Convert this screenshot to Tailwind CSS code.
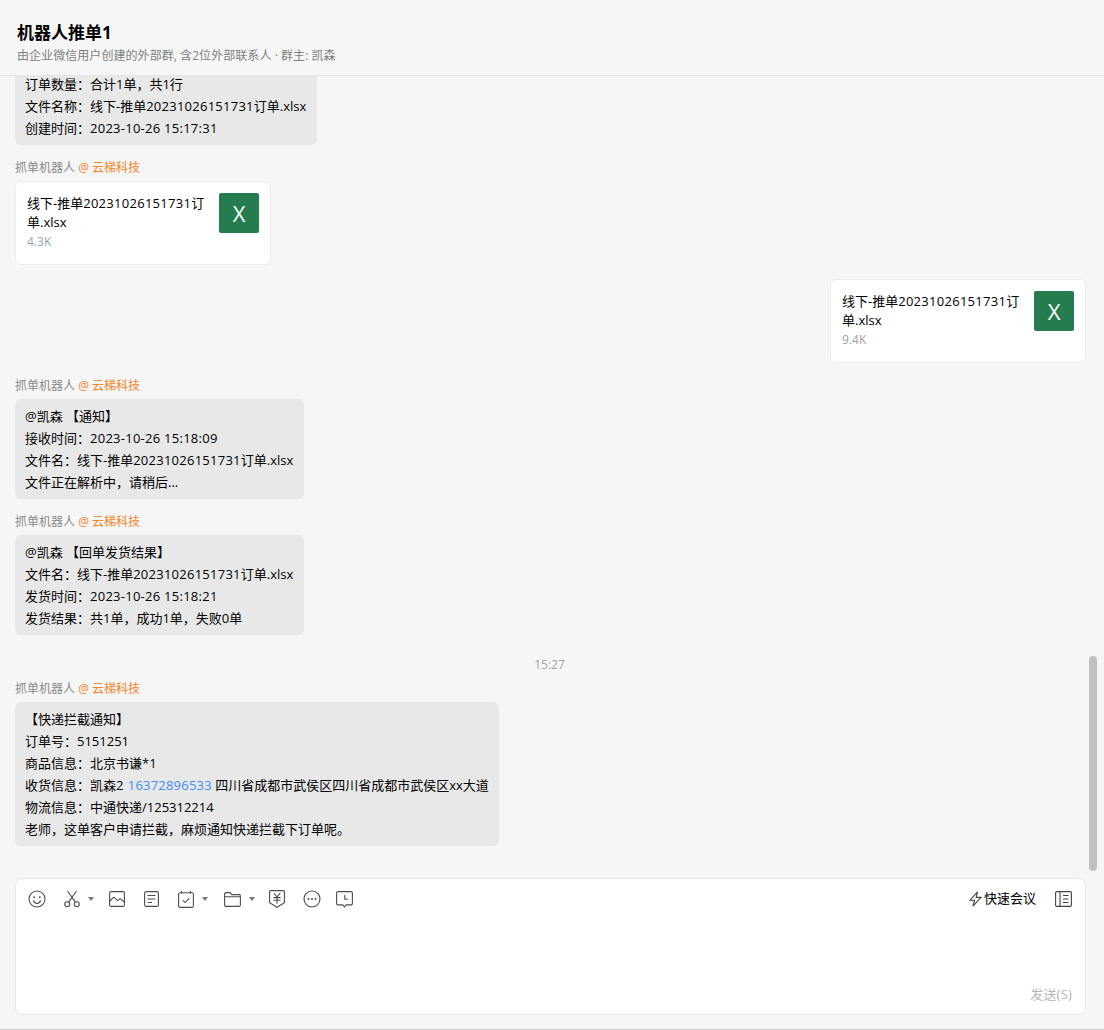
<!DOCTYPE html>
<html lang="zh">
<head>
<meta charset="utf-8">
<title>机器人推单1</title>
<script src="https://cdn.jsdelivr.net/npm/@tailwindcss/browser@4"></script>
</head>
<body class="bg-[#f6f6f6] font-['Open_Sans','Noto_Sans_CJK_SC',sans-serif] text-[13px] text-black">
<div class="relative flex flex-col h-[1030px] overflow-hidden border-b border-[#c9c9ce]">

    <!-- Header -->
    <header class="h-[76px] shrink-0 border-b border-[#e6e6e6] pl-[17px] pt-[20px]">
        <h1 class="text-[17px] leading-[26px] font-bold">机器人推单1</h1>
        <p class="text-[12px] leading-[18px] mt-[1px] tracking-[.06px] text-[#7f7f7f]">由企业微信用户创建的外部群, 含2位外部联系人 · 群主: 凯森</p>
    </header>

    <!-- Messages -->
    <main class="h-[795px] shrink-0 overflow-hidden flex flex-col justify-end px-[15px] pr-[18px]">
        <div class="w-fit shrink-0 bg-[#e8e8e8] rounded-md pl-2.5 pr-[11px] py-1.5 leading-[22px]">
            <p>订单数量：合计1单，共1行</p>
            <p>文件名称：线下-推单<span class="tracking-[.25px]">20231026151731</span>订单.xlsx</p>
            <p>创建时间：<span class="tracking-[.26px]">2023-10-26 15:17:31</span></p>
        </div>

        <p class="shrink-0 mt-[15px] mb-[5px] text-[12px] leading-[16px] text-[#8a8a8a]">抓单机器人 <span class="text-[#f5842c]">@ 云梯科技</span></p>
        <div class="shrink-0 flex justify-between w-[256px] h-[84px] bg-white border border-[#ececec] rounded-md px-[11px] pt-[11px]">
            <div class="w-[180px] leading-[19px] pt-[1px]">
                <p class="break-all">线下-推单<span class="tracking-[.28px]">20231026151731</span>订单.xlsx</p>
                <p class="text-[12px] text-[#8fa3b5] leading-[19px]">4.3K</p>
            </div>
            <div class="w-[40px] h-[40px] bg-[#257d4f] rounded-[2px] flex items-center justify-center text-white text-[22px]">X</div>
        </div>

        <div class="shrink-0 self-end flex justify-between w-[256px] h-[84px] mt-[14px] bg-white border border-[#ececec] rounded-md px-[11px] pt-[11px]">
            <div class="w-[180px] leading-[19px] pt-[1px]">
                <p class="break-all">线下-推单<span class="tracking-[.28px]">20231026151731</span>订单.xlsx</p>
                <p class="text-[12px] text-[#a0a0a0] leading-[19px]">9.4K</p>
            </div>
            <div class="w-[40px] h-[40px] bg-[#257d4f] rounded-[2px] flex items-center justify-center text-white text-[22px]">X</div>
        </div>

        <p class="shrink-0 mt-[15px] mb-[5px] text-[12px] leading-[16px] text-[#8a8a8a]">抓单机器人 <span class="text-[#f5842c]">@ 云梯科技</span></p>
        <div class="w-fit shrink-0 bg-[#e8e8e8] rounded-md pl-2.5 pr-[11px] py-1.5 leading-[22px]">
            <p>@凯森 【通知】</p>
            <p>接收时间：<span class="tracking-[.26px]">2023-10-26 15:18:09</span></p>
            <p>文件名：线下-推单<span class="tracking-[.25px]">20231026151731</span>订单.xlsx</p>
            <p>文件正在解析中，请稍后...</p>
        </div>

        <p class="shrink-0 mt-[15px] mb-[5px] text-[12px] leading-[16px] text-[#8a8a8a]">抓单机器人 <span class="text-[#f5842c]">@ 云梯科技</span></p>
        <div class="w-fit shrink-0 bg-[#e8e8e8] rounded-md pl-2.5 pr-[11px] py-1.5 leading-[22px]">
            <p>@凯森 【回单发货结果】</p>
            <p>文件名：线下-推单<span class="tracking-[.25px]">20231026151731</span>订单.xlsx</p>
            <p>发货时间：<span class="tracking-[.26px]">2023-10-26 15:18:21</span></p>
            <p>发货结果：共1单，成功1单，失败0单</p>
        </div>

        <p class="shrink-0 mt-[21px] pr-[2px] text-center text-[12px] leading-[18px] text-[#a3a3a3]">15:27</p>

        <p class="shrink-0 mt-[7px] mb-[5px] text-[12px] leading-[16px] text-[#8a8a8a]">抓单机器人 <span class="text-[#f5842c]">@ 云梯科技</span></p>
        <div class="w-fit shrink-0 bg-[#e8e8e8] rounded-md px-2.5 py-1.5 leading-[22px]">
            <p>【快递拦截通知】</p>
            <p>订单号：5151251</p>
            <p>商品信息：北京书谦*1</p>
            <p>收货信息：凯森2 <span class="ml-[1px] tracking-[.2px] text-[#3f8cf5]">16372896533</span> 四川省成都市武侯区四川省成都市武侯区xx大道</p>
            <p>物流信息：中通快递/125312214</p>
            <p>老师，这单客户申请拦截，麻烦通知快递拦截下订单呢。</p>
        </div>
        <div class="h-[25px] shrink-0"></div>
    </main>

    <!-- Scrollbar -->
    <div class="absolute left-[1089px] top-[656px] w-[8px] h-[215px] rounded-full bg-[#c0c0c0]"></div>

    <!-- Input box -->
    <section class="relative mx-[15px] mt-[7px] w-[1071px] h-[137px] bg-white border border-[#e6e6e6] rounded-[8px]">
        <div class="flex items-center h-[40px] pl-[12px] pr-[13px] text-[#4d4d4d]">
            <!-- smile -->
            <svg class="w-[18px] h-[18px]" viewBox="0 0 18 18" fill="none" stroke="currentColor" stroke-width="1.1"><circle cx="9" cy="9" r="8"/><circle cx="6.2" cy="7.2" r=".9" fill="currentColor" stroke="none"/><circle cx="11.8" cy="7.2" r=".9" fill="currentColor" stroke="none"/><path d="M5.2 10.6c1 2 2.4 3 3.8 3s2.800-1 3.800-3"/></svg>
            <!-- scissors -->
            <svg class="w-[16px] h-[18px] ml-[18px]" viewBox="0 0 16 18" fill="none" stroke="currentColor" stroke-width="1.1"><circle cx="3.200" cy="14.200" r="2.500"/><circle cx="12.800" cy="14.200" r="2.500"/><path d="M4.600 12.100 12.500 1M11.400 12.100 3.500 1"/></svg>
            <svg class="w-[6px] h-[4px] ml-[8px] text-[#777]" viewBox="0 0 6 4" fill="currentColor"><path d="M0 0h6L3 4z"/></svg>
            <!-- picture -->
            <svg class="w-[16px] h-[16px] ml-[15px]" viewBox="0 0 16 16" fill="none" stroke="currentColor" stroke-width="1.1"><rect x=".6" y=".6" width="14.800" height="14.800" rx="1.500"/><path d="M.8 10 4.800 6.200 8.600 9.600 11 7.600 15.200 10.800"/></svg>
            <!-- note -->
            <svg class="w-[15px] h-[16px] ml-[19px]" viewBox="0 0 15 16" fill="none" stroke="currentColor" stroke-width="1.1"><rect x=".6" y=".6" width="13.800" height="14.800" rx="1.500"/><path d="M3.500 4.500h8M3.500 8h8M3.500 11.500h4.500"/></svg>
            <!-- calendar check -->
            <svg class="w-[16px] h-[17px] ml-[19px]" viewBox="0 0 16 17" fill="none" stroke="currentColor" stroke-width="1.1"><rect x=".6" y="1.800" width="14.800" height="14.600" rx="1.500"/><path d="M3.500 0v2.500M12.500 0v2.500M4.800 9.400 7.200 11.600 11.200 7.400"/></svg>
            <svg class="w-[6px] h-[4px] ml-[8px] text-[#777]" viewBox="0 0 6 4" fill="currentColor"><path d="M0 0h6L3 4z"/></svg>
            <!-- folder -->
            <svg class="w-[17px] h-[15px] ml-[16px]" viewBox="0 0 17 15" fill="none" stroke="currentColor" stroke-width="1.1"><path d="M.6 4.800V2a1.400 1.400 0 0 1 1.400-1.400h4l1.800 2h7.200A1.400 1.400 0 0 1 16.400 4v9a1.400 1.400 0 0 1-1.400 1.400H2A1.400 1.400 0 0 1 .6 13zh15.800"/></svg>
            <svg class="w-[6px] h-[4px] ml-[8px] text-[#777]" viewBox="0 0 6 4" fill="currentColor"><path d="M0 0h6L3 4z"/></svg>
            <!-- red packet -->
            <svg class="w-[16px] h-[18px] ml-[14px]" viewBox="0 0 16 18" fill="none" stroke="currentColor" stroke-width="1.1"><path d="M.6 1.600A1 1 0 0 1 1.600.6h12.800a1 1 0 0 1 1 1v11.200L8 17.300.6 12.800z"/><path d="M4.800 3.200 8 7l3.200-3.800M4.500 7.600h7M4.500 10.300h7M8 7v6.500"/></svg>
            <!-- more -->
            <svg class="w-[18px] h-[18px] ml-[18px]" viewBox="0 0 18 18" fill="none" stroke="currentColor" stroke-width="1.1"><circle cx="9" cy="9" r="8"/><circle cx="5.500" cy="9" r="1" fill="currentColor" stroke="none"/><circle cx="9" cy="9" r="1" fill="currentColor" stroke="none"/><circle cx="12.500" cy="9" r="1" fill="currentColor" stroke="none"/></svg>
            <!-- clock message -->
            <svg class="w-[17px] h-[17px] ml-[15px]" viewBox="0 0 17 17" fill="none" stroke="currentColor" stroke-width="1.1"><path d="M2 .6h13A1.400 1.400 0 0 1 16.400 2v10.500a1.400 1.400 0 0 1-1.400 1.400h-4.800L8.500 16l-1.700-2.100H2a1.400 1.400 0 0 1-1.400-1.400V2A1.400 1.400 0 0 1 2 .6z"/><path d="M8.800 4v4.200h3"/></svg>

            <div class="ml-auto flex items-center text-black">
                <svg class="w-[13px] h-[16px] text-[#444]" viewBox="0 0 13 16" fill="none" stroke="currentColor" stroke-width="1.1"><path d="M8.500.8 1 9.200h4.600L4 15.200l8-8.800H7.200z"/></svg>
                <span class="ml-[2px] text-[13px]">快速会议</span>
                <svg class="w-[17px] h-[16px] ml-[19px] text-[#444]" viewBox="0 0 17 16" fill="none" stroke="currentColor" stroke-width="1.1"><rect x=".6" y=".6" width="15.800" height="14.800" rx="1.200"/><path d="M5 .6v14.800M8 4.500h5.500M8 8h5.500M8 11.500h5.500"/></svg>
            </div>
        </div>
        <span class="absolute right-[13px] bottom-[11px] text-[13px] leading-[18px] tracking-[.2px] text-[#b5b5b5]">发送(S)</span>
    </section>
</div>
</body>
</html>
